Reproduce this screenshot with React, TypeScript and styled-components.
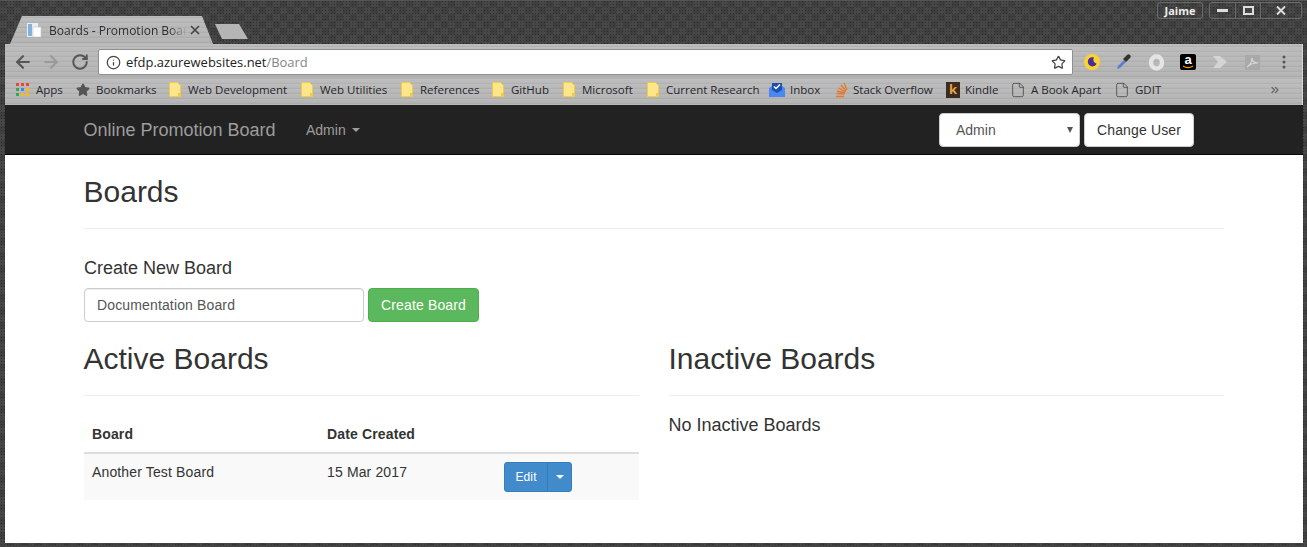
import React from "react"
import styled, { createGlobalStyle } from "styled-components"
import { ArrowLeft, ArrowRight, RotateCw, Star, Info, File, ChevronsRight } from "lucide-react"

const GlobalStyle = createGlobalStyle`
  html, body { margin: 0; padding: 0; background: #3a3a3a; overflow: hidden; }
  * { box-sizing: border-box; }
`

const metal = `
  repeating-linear-gradient(0deg, rgba(255,255,255,.07) 0 1px, rgba(0,0,0,.04) 1px 2px, transparent 2px 3px, rgba(255,255,255,.04) 3px 5px),
  linear-gradient(#bababa, #b2b2b2)
`

const Frame = styled.div`
  width: 1307px;
  height: 547px;
  display: flex;
  flex-direction: column;
  padding: 0 4px 4px 5px;
  background-color: #444;
  background-image:
    radial-gradient(circle, rgba(0, 0, 0, .3) 0 .7px, transparent 1px),
    conic-gradient(#474747 25%, #3f3f3f 0 50%, #474747 0 75%, #3f3f3f 0);
  background-size: 3px 3px, 14px 14px;
  font-family: "Liberation Sans", Arial, sans-serif;
`

const TitleStrip = styled.div`
  height: 44px;
  flex: none;
  display: flex;
  justify-content: space-between;
  align-items: flex-start;
  margin-left: -5px;
  margin-right: -4px;
  border-top: 1px solid #555;
`

const Tabs = styled.div`
  display: flex;
  align-items: flex-end;
  height: 43px;
  padding-left: 10px;
`

const Tab = styled.div`
  width: 203px;
  height: 28px;
  display: flex;
  align-items: center;
  padding: 0 13px 0 17px;
  background: ${metal};
  clip-path: polygon(0 100%, 12px 0, 192px 0, 100% 100%);
  font-family: "Open Sans", sans-serif;
  font-size: 12px;
  color: #2c2c33;
`

const TabTitle = styled.span`
  flex: 1;
  margin-left: 7px;
  white-space: nowrap;
  -webkit-mask-image: linear-gradient(90deg, #000 85%, transparent 98%);
  mask-image: linear-gradient(90deg, #000 85%, transparent 98%);
`

const NewTab = styled.div`
  width: 33px;
  height: 15px;
  margin: 0 0 5px 2px;
  background: #b5b5b5;
  clip-path: polygon(0 0, 24px 0, 100% 100%, 7px 100%);
`

const WindowControls = styled.div`
  display: flex;
  gap: 6px;
  padding: 1px 5px 0 0;
`

const ControlGroup = styled.div`
  display: flex;
  height: 17px;
  border: 1px solid #6a6a6a;
  border-radius: 3px;
  color: #ececec;
  font-family: "Open Sans", sans-serif;
  font-size: 11px;
  font-weight: 700;
`

const ControlCell = styled.div<{ $w: number }>`
  width: ${(p) => p.$w}px;
  display: flex;
  align-items: center;
  justify-content: center;
  & + & { border-left: 1px solid #6a6a6a; }
`

const Toolbar = styled.div`
  height: 34px;
  flex: none;
  display: flex;
  align-items: center;
  padding: 2px 0 0 3px;
  background: ${metal};
  border-right: 1px solid #d8d8d8;
`

const NavIcon = styled.div<{ $faded?: boolean; $w: number }>`
  width: ${(p) => p.$w}px;
  display: flex;
  justify-content: center;
  color: ${(p) => (p.$faded ? "#9a9a9a" : "#555")};
`

const Omnibox = styled.div`
  width: 975px;
  height: 26px;
  margin-left: 3px;
  padding: 0 6px 0 7px;
  display: flex;
  align-items: center;
  background: #fff;
  border: 1px solid #8f8f8f;
  border-radius: 2px;
  font-family: "Open Sans", sans-serif;
  font-size: 12.95px;
  color: #222;
`

const Url = styled.div`
  flex: 1;
  margin-left: 5px;
  span { color: #80868b; }
`

const Extensions = styled.div`
  display: flex;
  margin-left: 3px;
`

const Extension = styled.div`
  width: 32px;
  height: 20px;
  display: flex;
  align-items: center;
  justify-content: center;
`

const AmazonBadge = styled.div`
  position: relative;
  width: 16px;
  height: 16px;
  background: #000;
  border-radius: 2px;
  color: #fff;
  font-size: 13px;
  font-weight: 700;
  line-height: 12px;
  text-align: center;
`

const Bookmarks = styled.div`
  height: 27px;
  flex: none;
  display: flex;
  align-items: center;
  padding: 0 0 4px 11px;
  background: ${metal};
  border-right: 1px solid #d8d8d8;
  font-family: "Open Sans", sans-serif;
  font-size: 11.5px;
  color: #26262e;
`

const Bookmark = styled.div<{ $w: number; $gap?: number }>`
  width: ${(p) => p.$w}px;
  flex: none;
  display: flex;
  align-items: center;
  gap: ${(p) => p.$gap ?? 7}px;
  white-space: nowrap;
`

const PageIcon = styled(File)`
  margin-left: -3px;
`

const KindleIcon = styled.div`
  width: 14px;
  height: 16px;
  background: #3a2c22;
  color: #f0a040;
  font-size: 13px;
  font-weight: 700;
  line-height: 15px;
  text-align: center;
`

const Overflow = styled.div`
  margin-left: 52px;
  display: flex;
  color: #666;
`

const Page = styled.div`
  flex: 1;
  background: #fff;
  color: #333;
  font-size: 14px;
  line-height: 20px;
  letter-spacing: .14px;
`

const Navbar = styled.nav`
  height: 50px;
  display: flex;
  align-items: center;
  padding: 0 109px 0 79px;
  background: #222;
  border-bottom: 1px solid #080808;
  color: #9d9d9d;
  letter-spacing: 0;
`

const Brand = styled.div`
  font-size: 18px;
  width: 222.5px;
  margin-left: -.5px;
`

const NavLink = styled.div`
  flex: 1;
  display: flex;
  align-items: center;
  gap: 6px;
`

const Caret = styled.span<{ $color?: string }>`
  width: 0;
  height: 0;
  border-top: 4px solid ${(p) => p.$color ?? "#9d9d9d"};
  border-left: 4px solid transparent;
  border-right: 4px solid transparent;
`

const UserSelect = styled.div`
  width: 141px;
  height: 34px;
  display: flex;
  align-items: center;
  justify-content: space-between;
  padding: 0 6px 0 16px;
  background: #fff;
  border: 1px solid #ccc;
  border-radius: 4px;
  color: #555;
`

const SelectArrow = styled.span`
  width: 0;
  height: 0;
  border-top: 6px solid #555;
  border-left: 3px solid transparent;
  border-right: 3px solid transparent;
`

const DefaultButton = styled.button`
  width: 110px;
  height: 34px;
  margin: 0 0 0 4px;
  padding: 0;
  background: #fff;
  border: 1px solid #ccc;
  border-radius: 4px;
  color: #333;
  font: inherit;
  letter-spacing: .14px;
`

const Container = styled.div`
  width: 1140px;
  margin-left: 79px;
`

const Heading = styled.h2`
  margin: 0 0 0 -.5px;
  padding-top: 20px;
  font-size: 30px;
  font-weight: 500;
  line-height: 33px;
  letter-spacing: 0;
`

const Rule = styled.hr<{ $top: number }>`
  margin: ${(p) => p.$top}px 0 0;
  border: none;
  border-top: 1px solid #eee;
`

const SubHeading = styled.h4`
  margin: 29px 0 10px;
  font-size: 18px;
  font-weight: 500;
  line-height: 20px;
  letter-spacing: 0;
`

const CreateForm = styled.div`
  display: flex;
  gap: 4px;
`

const TextInput = styled.div`
  width: 280px;
  height: 34px;
  padding: 6px 12px;
  border: 1px solid #ccc;
  border-radius: 4px;
  box-shadow: inset 0 1px 1px rgba(0, 0, 0, .075);
  color: #555;
`

const SuccessButton = styled.button`
  width: 111px;
  height: 34px;
  padding: 0;
  background: #5cb85c;
  border: 1px solid #4cae4c;
  border-radius: 4px;
  color: #fff;
  font: inherit;
  letter-spacing: .14px;
`

const Columns = styled.div`
  display: grid;
  grid-template-columns: 555px 555px;
  column-gap: 30px;
`

const BoardsTable = styled.table`
  width: 100%;
  margin-top: 20px;
  border-collapse: collapse;
  table-layout: fixed;
  th {
    height: 37px;
    padding: 8px;
    text-align: left;
    vertical-align: bottom;
    border-bottom: 2px solid #ddd;
  }
  td {
    padding: 8px;
    vertical-align: top;
    background: #f9f9f9;
  }
`

const SplitButton = styled.div`
  display: flex;
  width: 68px;
  height: 30px;
  font-size: 12px;
  line-height: 18px;
  color: #fff;
  background: #428bca;
  border: 1px solid #357ebd;
  border-radius: 3px;
`

const SplitLabel = styled.div`
  width: 43px;
  display: flex;
  align-items: center;
  justify-content: center;
  border-right: 1px solid #357ebd;
`

const SplitCaret = styled.div`
  flex: 1;
  display: flex;
  align-items: center;
  justify-content: center;
`

const EmptyNote = styled.div`
  margin: 19px 0 0 -.5px;
  font-size: 18px;
  letter-spacing: 0;
`

const Folder = () => (
  <svg width="12" height="15" viewBox="0 0 12 15">
    <path d="M.5.5h8l3 3v11H.5z" fill="#fde58a" stroke="#f0c94a" />
    <rect x="9" y="11" width="2" height="3" fill="#f0c94a" />
  </svg>
)

const bookmarkFolders: [string, number][] = [
  ["Web Development", 132],
  ["Web Utilities", 100],
  ["References", 91],
  ["GitHub", 71],
  ["Microsoft", 84],
  ["Current Research", 122],
]

export default function App() {
  return (
    <Frame>
      <GlobalStyle />
      <TitleStrip>
        <Tabs>
          <Tab>
            <svg width="15" height="16" viewBox="0 0 15 16">
              <rect x="0" y="1" width="11" height="14" fill="#e8eef4" />
              <rect x="1" y="2" width="4" height="12" fill="#7fb2de" />
              <rect x="6" y="5" width="8" height="10" fill="#fff" stroke="#bfc7cf" strokeWidth=".6" />
            </svg>
            <TabTitle>Boards - Promotion Boar</TabTitle>
            <svg width="10" height="10" viewBox="0 0 10 10">
              <path d="M1 1l8 8M9 1l-8 8" stroke="#444" strokeWidth="1.6" />
            </svg>
          </Tab>
          <NewTab />
        </Tabs>
        <WindowControls>
          <ControlGroup>
            <ControlCell $w={44}>Jaime</ControlCell>
          </ControlGroup>
          <ControlGroup>
            <ControlCell $w={25}>
              <svg width="11" height="5" viewBox="0 0 11 5"><rect y="1" width="11" height="3" fill="#ddd" /></svg>
            </ControlCell>
            <ControlCell $w={25}>
              <svg width="11" height="9" viewBox="0 0 11 9"><rect x="1" y="1" width="9" height="7" fill="none" stroke="#ddd" strokeWidth="2" /></svg>
            </ControlCell>
            <ControlCell $w={41}>
              <svg width="10" height="9" viewBox="0 0 10 9"><path d="M1 .5l8 8M9 .5l-8 8" stroke="#ddd" strokeWidth="2" /></svg>
            </ControlCell>
          </ControlGroup>
        </WindowControls>
      </TitleStrip>

      <Toolbar>
        <NavIcon $w={29}><ArrowLeft size={20} strokeWidth={2.5} /></NavIcon>
        <NavIcon $w={27} $faded><ArrowRight size={20} strokeWidth={2.5} /></NavIcon>
        <NavIcon $w={31}><RotateCw size={18} strokeWidth={2.6} /></NavIcon>
        <Omnibox>
          <Info size={15} strokeWidth={2} color="#444" />
          <Url>efdp.azurewebsites.net<span>/Board</span></Url>
          <Star size={15} strokeWidth={2} color="#444" />
        </Omnibox>
        <Extensions>
          <Extension>
            <svg width="16" height="16" viewBox="0 0 16 16">
              <circle cx="8" cy="8" r="8" fill="#fbd32f" />
              <path d="M10 3.5a4.6 4.6 0 1 0 2.6 6.2A4 4 0 0 1 10 3.5z" fill="#4a2c9c" />
            </svg>
          </Extension>
          <Extension>
            <svg width="16" height="16" viewBox="0 0 16 16">
              <path d="M1 15l1-3 6-6 2 2-6 6z" fill="#5a7fd0" />
              <path d="M7 5l2-2 2-2c1-1 2-1 3 0s1 2 0 3l-2 2-2 2z" fill="#333" />
            </svg>
          </Extension>
          <Extension>
            <svg width="17" height="17" viewBox="0 0 17 17">
              <ellipse cx="8.5" cy="8.5" rx="5.5" ry="6" fill="none" stroke="#e4e4e4" strokeWidth="4.5" />
            </svg>
          </Extension>
          <Extension>
            <AmazonBadge>
              a
              <svg width="12" height="4" viewBox="0 0 12 4" style={{ position: "absolute", left: 2, bottom: 1 }}>
                <path d="M1 1c3 2 7 2 10 0" fill="none" stroke="#f90" strokeWidth="1.2" />
              </svg>
            </AmazonBadge>
          </Extension>
          <Extension>
            <svg width="14" height="14" viewBox="0 0 14 14">
              <path d="M0 1h7l7 6-7 6H0l5-6z" fill="#d4d4d4" />
            </svg>
          </Extension>
          <Extension>
            <svg width="15" height="15" viewBox="0 0 15 15">
              <rect width="15" height="15" fill="#a9a9a9" />
              <path d="M2 12c3-2 5-6 5-9 0 3 2 5 6 5-4 0-8 1-11 4z" fill="none" stroke="#d6d6d6" strokeWidth="1.2" />
            </svg>
          </Extension>
          <Extension>
            <svg width="4" height="14" viewBox="0 0 4 14">
              <circle cx="2" cy="2" r="1.5" fill="#555" />
              <circle cx="2" cy="7" r="1.5" fill="#555" />
              <circle cx="2" cy="12" r="1.5" fill="#555" />
            </svg>
          </Extension>
        </Extensions>
      </Toolbar>

      <Bookmarks>
        <Bookmark $w={60}>
          <svg width="13" height="13" viewBox="0 0 13 13">
            <rect width="3" height="3" fill="#e8453c" /><rect x="5" width="3" height="3" fill="#e8453c" /><rect x="10" width="3" height="3" fill="#e8453c" />
            <rect y="5" width="3" height="3" fill="#34a853" /><rect x="5" y="5" width="3" height="3" fill="#4285f4" /><rect x="10" y="5" width="3" height="3" fill="#fbbc05" />
            <rect y="10" width="3" height="3" fill="#34a853" /><rect x="5" y="10" width="3" height="3" fill="#fbbc05" /><rect x="10" y="10" width="3" height="3" fill="#fbbc05" />
          </svg>
          Apps
        </Bookmark>
        <Bookmark $w={93} $gap={6}>
          <Star size={14} fill="#555" color="#555" />
          Bookmarks
        </Bookmark>
        {bookmarkFolders.map(([label, width]) => (
          <Bookmark key={label} $w={width}>
            <Folder />
            {label}
          </Bookmark>
        ))}
        <Bookmark $w={65} $gap={5}>
          <svg width="16" height="15" viewBox="0 0 16 15">
            <path d="M0 6l3-2h10l3 2v9H0z" fill="#4a8af0" />
            <path d="M3 1h10v7l-5 3-5-3z" fill="#1d4fb0" />
            <path d="M5 4.5l2 2 4-4" fill="none" stroke="#fff" strokeWidth="1.5" />
          </svg>
          Inbox
        </Bookmark>
        <Bookmark $w={112} $gap={5}>
          <svg width="14" height="16" viewBox="0 0 14 16">
            <path d="M2 14.5h8M2.5 11.5l8 .5M3 9l8 2M4.5 6l7 4M7 3l5 6M10 1l3 7" stroke="#e8792a" strokeWidth="1.4" fill="none" />
          </svg>
          Stack Overflow
        </Bookmark>
        <Bookmark $w={67} $gap={5}>
          <KindleIcon>k</KindleIcon>
          Kindle
        </Bookmark>
        <Bookmark $w={104} $gap={5}>
          <PageIcon size={16} strokeWidth={1.2} color="#444" />
          A Book Apart
        </Bookmark>
        <Bookmark $w={100} $gap={5}>
          <PageIcon size={16} strokeWidth={1.2} color="#444" />
          GDIT
        </Bookmark>
        <Overflow><ChevronsRight size={12} strokeWidth={2.5} /></Overflow>
      </Bookmarks>

      <Page>
        <Navbar>
          <Brand>Online Promotion Board</Brand>
          <NavLink>Admin <Caret /></NavLink>
          <UserSelect>Admin <SelectArrow /></UserSelect>
          <DefaultButton>Change User</DefaultButton>
        </Navbar>
        <Container>
          <Heading>Boards</Heading>
          <Rule $top={20} />
          <SubHeading>Create New Board</SubHeading>
          <CreateForm>
            <TextInput>Documentation Board</TextInput>
            <SuccessButton>Create Board</SuccessButton>
          </CreateForm>
          <Columns>
            <section>
              <Heading>Active Boards</Heading>
              <Rule $top={20} />
              <BoardsTable>
                <colgroup>
                  <col width="235" />
                  <col width="177" />
                  <col />
                </colgroup>
                <thead>
                  <tr>
                    <th>Board</th>
                    <th>Date Created</th>
                    <th />
                  </tr>
                </thead>
                <tbody>
                  <tr>
                    <td>Another Test Board</td>
                    <td>15 Mar 2017</td>
                    <td>
                      <SplitButton>
                        <SplitLabel>Edit</SplitLabel>
                        <SplitCaret><Caret $color="#fff" /></SplitCaret>
                      </SplitButton>
                    </td>
                  </tr>
                </tbody>
              </BoardsTable>
            </section>
            <section>
              <Heading>Inactive Boards</Heading>
              <Rule $top={20} />
              <EmptyNote>No Inactive Boards</EmptyNote>
            </section>
          </Columns>
        </Container>
      </Page>
    </Frame>
  )
}
